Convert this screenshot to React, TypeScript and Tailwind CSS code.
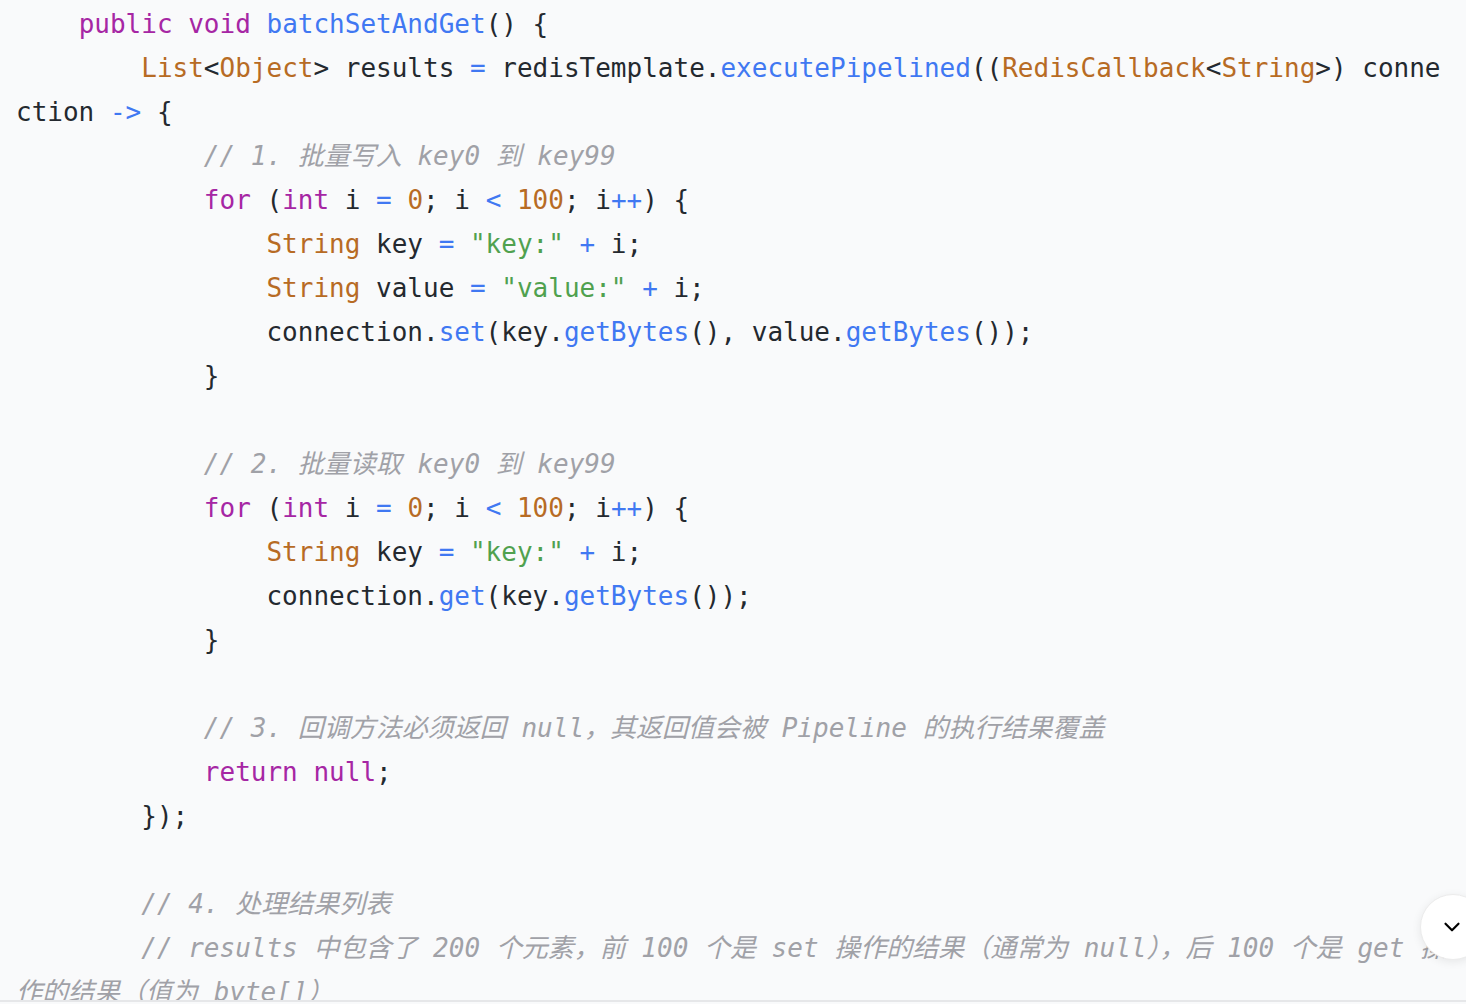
import React from "react";
import { ChevronDown } from "lucide-react";

type Tok = [string, string];

const K = "text-[#a626a4]"; // keyword purple
const F = "text-[#4078f2]"; // function blue
const T = "text-[#b76b24]"; // type / number
const S = "text-[#50a14f]"; // string
const O = "text-[#4078f2]"; // operator
const C = "text-[#a0a1a7] italic"; // comment
const D = "text-[#24292f]"; // default

const lines: Tok[][] = [
  [[D, "    "], [K, "public"], [D, " "], [K, "void"], [D, " "], [F, "batchSetAndGet"], [D, "() {"]],
  [
    [D, "        "], [T, "List"], [D, "<"], [T, "Object"], [D, "> results "], [O, "="], [D, " redisTemplate."],
    [F, "executePipelined"], [D, "(("], [T, "RedisCallback"], [D, "<"], [T, "String"], [D, ">) connection "],
    [O, "->"], [D, " {"],
  ],
  [[C, "            // 1. 批量写入 key0 到 key99"]],
  [[D, "            "], [K, "for"], [D, " ("], [K, "int"], [D, " i "], [O, "="], [D, " "], [T, "0"], [D, "; i "], [O, "<"], [D, " "], [T, "100"], [D, "; i"], [O, "++"], [D, ") {"]],
  [[D, "                "], [T, "String"], [D, " key "], [O, "="], [D, " "], [S, "\"key:\""], [D, " "], [O, "+"], [D, " i;"]],
  [[D, "                "], [T, "String"], [D, " value "], [O, "="], [D, " "], [S, "\"value:\""], [D, " "], [O, "+"], [D, " i;"]],
  [[D, "                connection."], [F, "set"], [D, "(key."], [F, "getBytes"], [D, "(), value."], [F, "getBytes"], [D, "());"]],
  [[D, "            }"]],
  [[D, ""]],
  [[C, "            // 2. 批量读取 key0 到 key99"]],
  [[D, "            "], [K, "for"], [D, " ("], [K, "int"], [D, " i "], [O, "="], [D, " "], [T, "0"], [D, "; i "], [O, "<"], [D, " "], [T, "100"], [D, "; i"], [O, "++"], [D, ") {"]],
  [[D, "                "], [T, "String"], [D, " key "], [O, "="], [D, " "], [S, "\"key:\""], [D, " "], [O, "+"], [D, " i;"]],
  [[D, "                connection."], [F, "get"], [D, "(key."], [F, "getBytes"], [D, "());"]],
  [[D, "            }"]],
  [[D, ""]],
  [[C, "            // 3. 回调方法必须返回 null，其返回值会被 Pipeline 的执行结果覆盖"]],
  [[D, "            "], [K, "return"], [D, " "], [K, "null"], [D, ";"]],
  [[D, "        });"]],
  [[D, ""]],
  [[C, "        // 4. 处理结果列表"]],
  [[C, "        // results 中包含了 200 个元素，前 100 个是 set 操作的结果（通常为 null），后 100 个是 get 操作的结果（值为 byte[]）"]],
];

export default function App() {
  return (
    <div className="relative w-[1466px] h-[1004px] overflow-hidden bg-[#f9fafb]">
      <div className="h-[1002px] overflow-hidden border-b-2 border-[#e6e7e9]">
        <pre
          className="m-0 pl-4 pr-4 pt-[2px] whitespace-pre-wrap break-all text-[26px] leading-[44px] text-[#24292f]"
          style={{ fontFamily: '"DejaVu Sans Mono", "Noto Sans CJK SC", monospace' }}
        >
          {lines.map((ln, i) => (
            <div key={i} className="min-h-[44px]">
              {ln.map(([cls, txt], j) => (
                <span key={j} className={cls}>
                  {txt}
                </span>
              ))}
            </div>
          ))}
        </pre>
      </div>
      <div className="absolute left-[1420px] top-[894px] w-[66px] h-[66px] rounded-full bg-white border border-[#ececec] shadow-[0_2px_10px_rgba(0,0,0,0.08)] flex items-center justify-center">
        <ChevronDown className="w-[26px] h-[26px] text-black -ml-[2px]" strokeWidth={2} />
      </div>
    </div>
  );
}
